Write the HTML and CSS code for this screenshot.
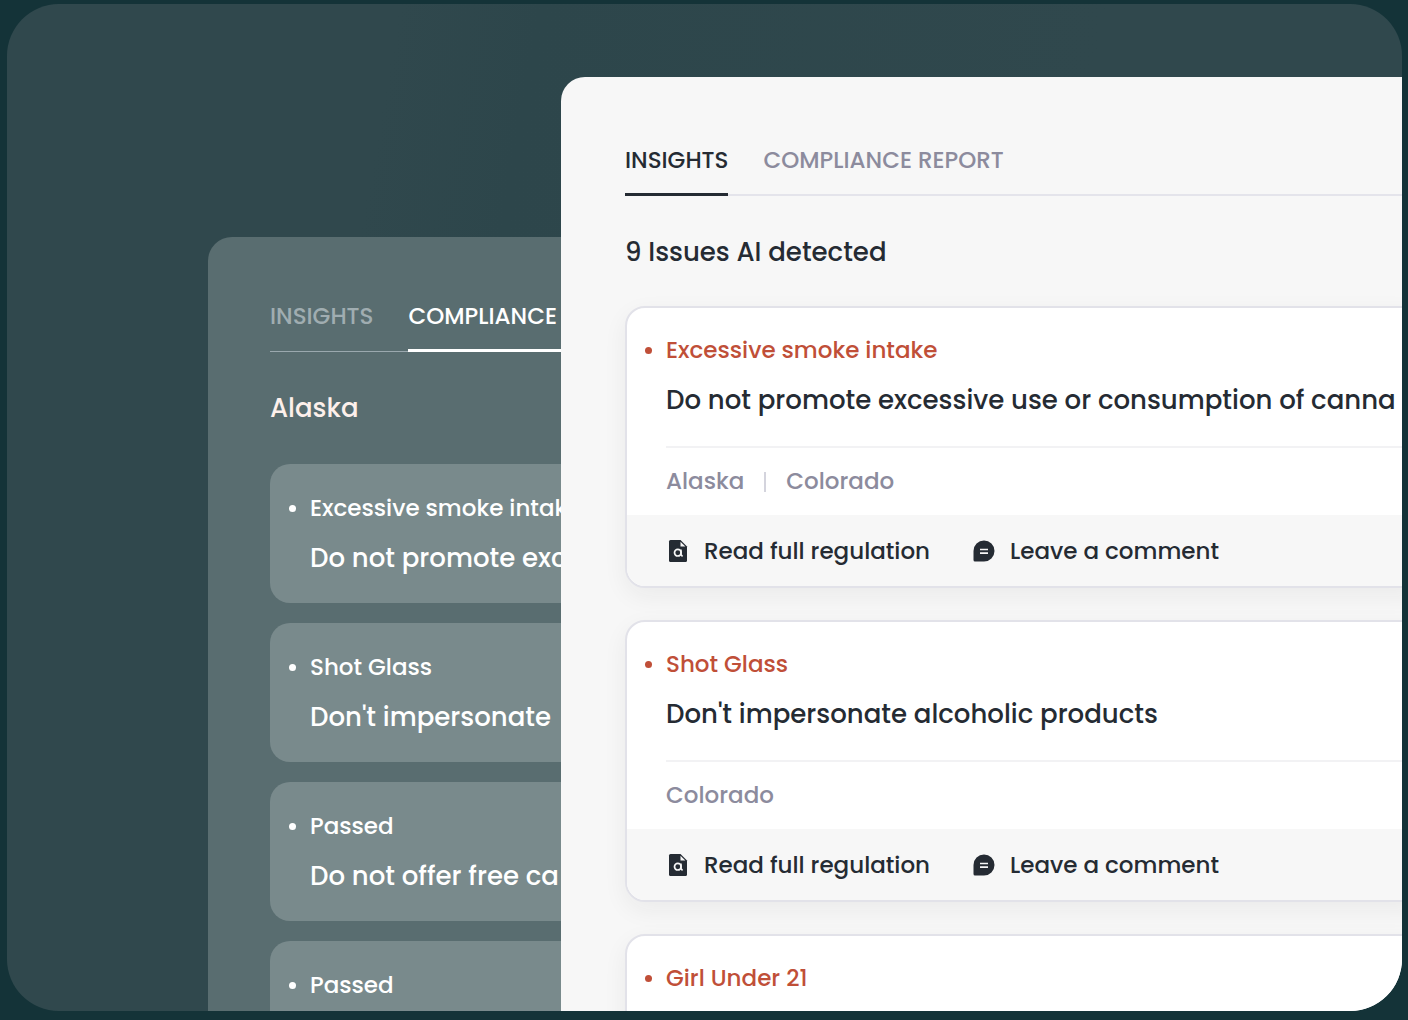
FILE: index.html
```html
<!DOCTYPE html>
<html lang="en">
<head>
<meta charset="utf-8">
<meta name="viewport" content="width=device-width, initial-scale=1">
<title>Compliance insights</title>
<link rel="stylesheet" href="styles.css">
</head>
<body>
<svg class="sprite" width="0" height="0" aria-hidden="true">
  <symbol id="icon-file" viewBox="0 0 24 24">
    <path fill="currentColor" d="M4.500 1H14.500L21 7.500V21.500Q21 23 19.500 23H4.500Q3 23 3 21.500V2.500Q3 1 4.500 1Z"/>
    <path fill="#f7f7f7" d="M14.500 2.800V7.500H19.300Z"/>
    <circle cx="11.800" cy="13.700" r="3.300" fill="none" stroke="#f7f7f7" stroke-width="1.700"/>
    <path d="M15 10.500V15.500L16.500 17.500" fill="none" stroke="#f7f7f7" stroke-width="1.500"/>
  </symbol>
  <symbol id="icon-comment" viewBox="0 0 24 24">
    <path fill="currentColor" d="M12 1.500A10.500 10.500 0 0 1 12 22.500H3Q1.500 22.500 1.500 21V12A10.500 10.500 0 0 1 12 1.500Z"/>
    <path d="M8 10.500H16M8 14.200H16" stroke="#f7f7f7" stroke-width="1.700"/>
  </symbol>
</svg>
<main class="frame">
  <section class="panel panel-back" aria-label="Compliance report">
    <nav class="tabs">
      <button class="tab" type="button">INSIGHTS</button>
      <button class="tab tab-active" type="button">COMPLIANCE</button>
    </nav>
    <h2 class="heading">Alaska</h2>
    <div class="cards">
      <article class="card"><div class="rule"><h3 class="name">Excessive smoke intake</h3><p class="text">Do not promote exc</p></div></article>
      <article class="card"><div class="rule"><h3 class="name">Shot Glass</h3><p class="text">Don't impersonate</p></div></article>
      <article class="card"><div class="rule"><h3 class="name">Passed</h3><p class="text">Do not offer free ca</p></div></article>
      <article class="card"><div class="rule"><h3 class="name">Passed</h3></div></article>
    </div>
  </section>
  <section class="panel panel-front" aria-label="Insights">
    <nav class="tabs">
      <button class="tab tab-active" type="button">INSIGHTS</button>
      <button class="tab" type="button">COMPLIANCE REPORT</button>
    </nav>
    <h2 class="heading">9 Issues AI detected</h2>
    <div class="cards">
      <article class="card">
        <div class="rule"><h3 class="name">Excessive smoke intake</h3><p class="text">Do not promote excessive use or consumption of canna</p></div>
        <ul class="states"><li>Alaska</li><li>Colorado</li></ul>
        <footer class="actions">
          <button class="action" type="button"><svg class="icon"><use href="#icon-file"/></svg>Read full regulation</button>
          <button class="action" type="button"><svg class="icon"><use href="#icon-comment"/></svg>Leave a comment</button>
        </footer>
      </article>
      <article class="card">
        <div class="rule"><h3 class="name">Shot Glass</h3><p class="text">Don't impersonate alcoholic products</p></div>
        <ul class="states"><li>Colorado</li></ul>
        <footer class="actions">
          <button class="action" type="button"><svg class="icon"><use href="#icon-file"/></svg>Read full regulation</button>
          <button class="action" type="button"><svg class="icon"><use href="#icon-comment"/></svg>Leave a comment</button>
        </footer>
      </article>
      <article class="card">
        <div class="rule"><h3 class="name">Girl Under 21</h3></div>
      </article>
    </div>
  </section>
</main>
</body>
</html>
```
FILE: styles.css
```css
* { box-sizing: border-box; }

body {
  margin: 0;
  height: 100vh;
  padding: 4px 6px 9px 7px;
  background: #143338;
  color: #252b33;
  font-family: Poppins, Inter, sans-serif;
  font-weight: 500;
  overflow: hidden;
}

h2, h3, p, ul { margin: 0; padding: 0; font-weight: inherit; }

button {
  padding: 0;
  border: 0;
  background: none;
  color: inherit;
  font: inherit;
  cursor: pointer;
}

.sprite { display: block; }

.frame {
  display: grid;
  grid-template-columns: 554px minmax(0, 1fr);
  grid-template-rows: minmax(0, 1fr);
  height: 100%;
  border-radius: 52px;
  background: linear-gradient(100deg, #30484d 25%, #2d464b 34%, #30484d 70%);
  overflow: hidden;
}

.panel {
  border-top-left-radius: 24px;
  white-space: nowrap;
  overflow: hidden;
}

.panel-back {
  margin: 233px 0 0 201px;
  padding: 59px 0 0 62px;
  background: #596d70;
  color: #fff;
}

.panel-front {
  margin-top: 73px;
  padding: 63px 0 0 64px;
  background: #f7f7f7;
}

.tabs {
  display: flex;
  gap: 35px;
  height: 56px;
  font-size: 23px;
  line-height: 40px;
  box-shadow: inset 0 -2px #e4e4eb;
}

.tab {
  padding-bottom: 13px;
  border-bottom: 3px solid transparent;
  color: #8c8b9d;
}

.panel-front .tab-active { color: #252b33; border-color: #252b33; }
.panel-back .tabs { box-shadow: inset 0 -1px #9aa8ae; }
.panel-back .tab { color: #a0adb1; }
.panel-back .tab-active { flex: 1 0 auto; text-align: left; color: #fff; border-color: #fff; }

.heading {
  margin: 36px 0 34px;
  font-size: 26px;
  line-height: 40px;
}

.panel-back .heading { margin-bottom: 36px; color: #fdf0eb; }

.cards { display: grid; gap: 32px; margin-right: -24px; }
.panel-back .cards { gap: 20px; }

.card {
  border: 2px solid #e2e2e9;
  border-radius: 20px;
  background: #fff;
  box-shadow: 0 8px 24px rgba(30, 30, 40, 0.06);
  overflow: hidden;
}

.panel-back .card {
  border: 0;
  background: #798a8c;
  box-shadow: none;
}

.rule {
  display: grid;
  grid-template-columns: 7px 1fr;
  column-gap: 14px;
  row-gap: 12px;
  align-items: center;
  min-height: 138px;
  align-content: start;
  padding: 24px 0 26px 18px;
}

.panel-back .rule { min-height: 139px; padding: 26px 0 25px 19px; }

.rule::before {
  content: "";
  width: 7px;
  height: 7px;
  border-radius: 50%;
  background: #c04f38;
}

.panel-back .rule::before { background: #fff; }

.name {
  color: #c04f38;
  font-size: 23px;
  line-height: 36px;
}

.panel-back .name { color: #fff; }

.text {
  grid-column: 2;
  font-size: 26px;
  line-height: 40px;
}

.states {
  display: flex;
  align-items: center;
  gap: 20px;
  margin-left: 39px;
  border-top: 2px solid #f2f2f4;
  color: #8c8b9d;
  font-size: 23px;
  line-height: 67px;
  list-style: none;
}

.states li + li { display: flex; align-items: center; gap: 20px; }

.states li + li::before {
  content: "";
  width: 2px;
  height: 20px;
  background: #d4d4dd;
}

.actions {
  display: flex;
  align-items: center;
  gap: 42px;
  height: 71px;
  padding-left: 39px;
  background: #f7f7f7;
  font-size: 23px;
  line-height: 36px;
}

.action { display: flex; align-items: center; gap: 14px; }
.icon { width: 24px; height: 24px; }
```
